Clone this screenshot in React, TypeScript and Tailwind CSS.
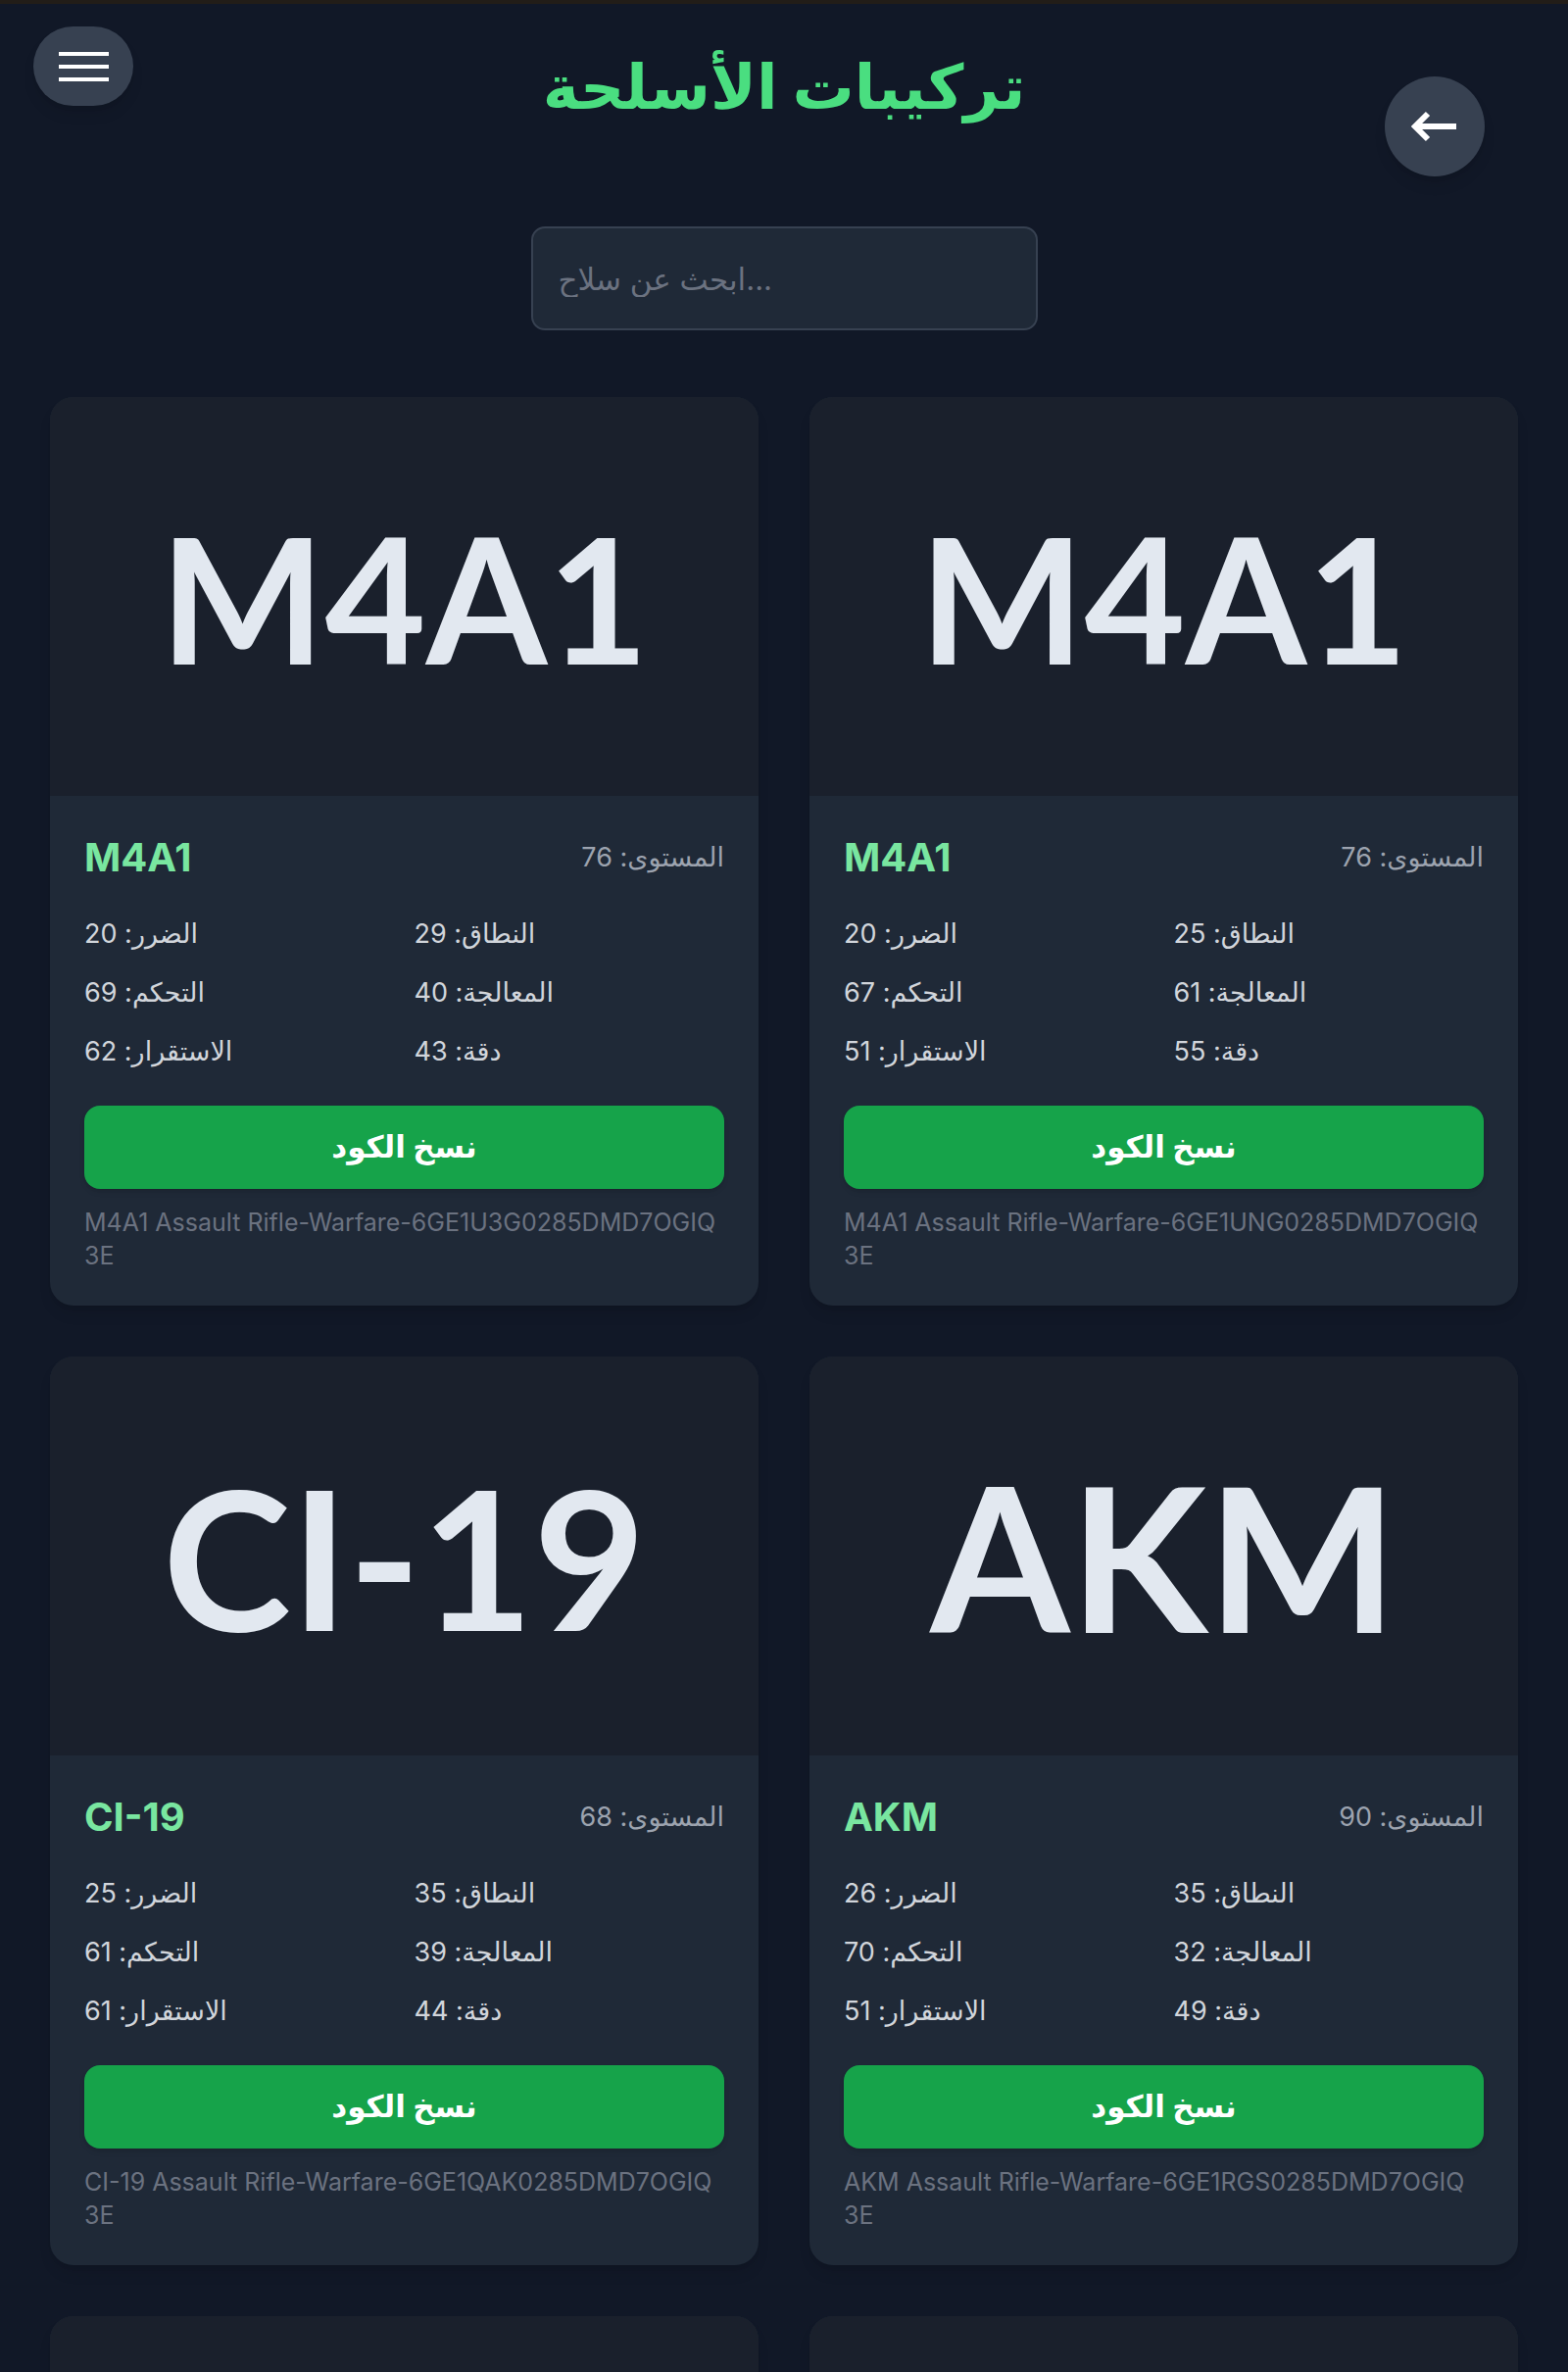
import React from "react";

type Weapon = {
  name: string;
  size: string;
  level: number;
  stats: [string, number][];
  code: string;
};

const weapons: Weapon[] = [
  {
    name: "M4A1",
    size: "text-[178px]",
    level: 76,
    stats: [
      ["الضرر", 20],
      ["النطاق", 29],
      ["التحكم", 69],
      ["المعالجة", 40],
      ["الاستقرار", 62],
      ["دقة", 43],
    ],
    code: "M4A1 Assault Rifle-Warfare-6GE1U3G0285DMD7OGIQ\u200B3E",
  },
  {
    name: "M4A1",
    size: "text-[178px]",
    level: 76,
    stats: [
      ["الضرر", 20],
      ["النطاق", 25],
      ["التحكم", 67],
      ["المعالجة", 61],
      ["الاستقرار", 51],
      ["دقة", 55],
    ],
    code: "M4A1 Assault Rifle-Warfare-6GE1UNG0285DMD7OGIQ\u200B3E",
  },
  {
    name: "CI-19",
    size: "text-[198px]",
    level: 68,
    stats: [
      ["الضرر", 25],
      ["النطاق", 35],
      ["التحكم", 61],
      ["المعالجة", 39],
      ["الاستقرار", 61],
      ["دقة", 44],
    ],
    code: "CI-19 Assault Rifle-Warfare-6GE1QAK0285DMD7OGIQ\u200B3E",
  },
  {
    name: "AKM",
    size: "text-[205px]",
    level: 90,
    stats: [
      ["الضرر", 26],
      ["النطاق", 35],
      ["التحكم", 70],
      ["المعالجة", 32],
      ["الاستقرار", 51],
      ["دقة", 49],
    ],
    code: "AKM Assault Rifle-Warfare-6GE1RGS0285DMD7OGIQ\u200B3E",
  },
  {
    name: "HBRa3",
    size: "text-[170px]",
    level: 82,
    stats: [
      ["الضرر", 24],
      ["النطاق", 33],
      ["التحكم", 64],
      ["المعالجة", 45],
      ["الاستقرار", 58],
      ["دقة", 47],
    ],
    code: "HBRa3 Assault Rifle-Warfare-6GE1HBR0285DMD7OGIQ\u200B3E",
  },
  {
    name: "ASM10",
    size: "text-[170px]",
    level: 71,
    stats: [
      ["الضرر", 30],
      ["النطاق", 31],
      ["التحكم", 55],
      ["المعالجة", 36],
      ["الاستقرار", 49],
      ["دقة", 41],
    ],
    code: "ASM10 Assault Rifle-Warfare-6GE1ASM0285DMD7OGIQ\u200B3E",
  },
];

const WeaponCard = ({ w }: { w: Weapon }) => {
  return (
    <div className="rounded-[24px] overflow-hidden shadow-lg bg-[#1f2937]">
      {/* صورة السلاح */}
      <div className="h-[407px] bg-[#1a202c] flex items-center justify-center">
        <span
          className={`${w.size} leading-none font-bold text-[#e2e8f0] font-[family-name:Lato,'DejaVu_Sans',sans-serif]`}
        >
          {w.name}
        </span>
      </div>

      {/* التفاصيل */}
      <div className="px-[35px] pt-[35px] pb-[34px]">
        <div className="flex items-center justify-between h-[56px]">
          <span className="text-[40px] font-bold text-[#79e6a0]">{w.name}</span>
          <span className="text-[27px] text-[#9ca3af]">المستوى: {w.level}</span>
        </div>

        <div className="grid grid-cols-2 gap-x-[20px] gap-y-[20px] mt-[30px]">
          {w.stats.map(([label, value]) => (
            <div key={label} className="h-[40px] flex items-center text-[27px] text-[#d1d5db]">
              {label}: {value}
            </div>
          ))}
        </div>

        <button className="mt-[35px] h-[85px] w-full rounded-[16px] bg-[#16a34a] text-white text-[31px] font-bold shadow-md">
          نسخ الكود
        </button>

        <p className="mt-[17px] text-[25px] leading-[34px] text-[#6b7280] break-words">{w.code}</p>
      </div>
    </div>
  );
};

export default function App() {
  return (
    <div className="min-h-screen bg-[#111827] font-[family-name:Inter,'DejaVu_Sans',sans-serif] relative">
      <div className="h-[4px] bg-[#221d18]" />

      {/* زر القائمة */}
      <button className="absolute left-[34px] top-[27px] w-[102px] h-[81px] rounded-full bg-[#374151] shadow-lg flex flex-col items-center justify-center gap-[9px]">
        <span className="block w-[51px] h-[4px] bg-white" />
        <span className="block w-[51px] h-[4px] bg-white" />
        <span className="block w-[51px] h-[4px] bg-white" />
      </button>

      {/* زر الرجوع */}
      <button className="absolute left-[1413px] top-[78px] w-[102px] h-[102px] rounded-full bg-[#374151] shadow-lg flex items-center justify-center">
        <svg width="48" height="32" viewBox="0 0 48 32" fill="none">
          <path d="M46 16H4" stroke="white" strokeWidth="6" />
          <path d="M17 3L4 16L17 29" stroke="white" strokeWidth="6" />
        </svg>
      </button>

      <div className="pt-[44px] flex flex-col items-center">
        <h1 className="text-[63px] leading-[80px] font-bold text-[#4ade80]">تركيبات الأسلحة</h1>
        <input
          className="mt-[103px] w-[517px] h-[106px] rounded-[14px] bg-[#1f2937] border-2 border-[#374151] px-[26px] text-[31px] text-white placeholder:text-[#6b7280] outline-none"
          placeholder="ابحث عن سلاح..."
        />
      </div>

      <div className="px-[51px] mt-[68px] grid grid-cols-2 gap-[52px]">
        {weapons.map((w, i) => (
          <WeaponCard key={i} w={w} />
        ))}
      </div>
    </div>
  );
}
